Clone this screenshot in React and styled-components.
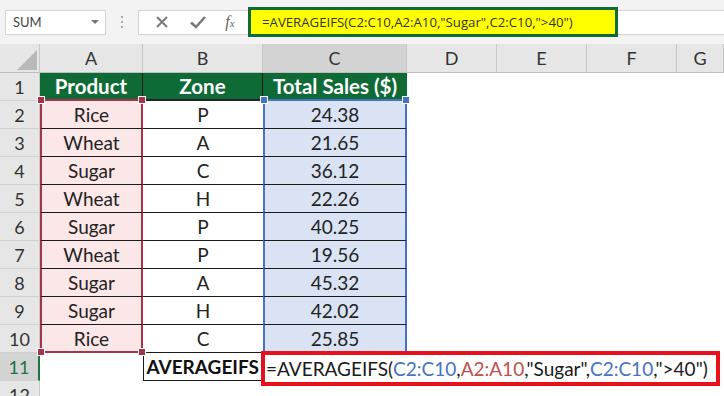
import React from 'react';
import styled, { createGlobalStyle } from 'styled-components';

const GlobalStyle = createGlobalStyle`
  html, body {
    margin: 0;
    padding: 0;
    background: #ffffff;
    overflow: hidden;
  }
  body {
    font-family: Lato, "Liberation Sans", sans-serif;
  }
`;

const rows = [
  ['Rice', 'P', '24.38'],
  ['Wheat', 'A', '21.65'],
  ['Sugar', 'C', '36.12'],
  ['Wheat', 'H', '22.26'],
  ['Sugar', 'P', '40.25'],
  ['Wheat', 'P', '19.56'],
  ['Sugar', 'A', '45.32'],
  ['Sugar', 'H', '42.02'],
  ['Rice', 'C', '25.85'],
];

const columns = ['A', 'B', 'C', 'D', 'E', 'F', 'G'];

const App = () => (
  <Page>
    <GlobalStyle />
    <Toolbar>
      <NameBox>
        <span>SUM</span>
        <Caret />
      </NameBox>
      <Grip>
        <i />
        <i />
        <i />
      </Grip>
      <FxButtons>
        <svg width="16" height="16" viewBox="0 0 16 16">
          <path d="M3 3 L13 13 M13 3 L3 13" stroke="#7a7a7a" strokeWidth="2" fill="none" />
        </svg>
        <svg width="18" height="16" viewBox="0 0 18 16">
          <path d="M2 8.5 L7 13 L16 3" stroke="#7a7a7a" strokeWidth="2.6" fill="none" />
        </svg>
        <FxLabel>
          f<sub>x</sub>
        </FxLabel>
      </FxButtons>
      <FormulaBox>=AVERAGEIFS(C2:C10,A2:A10,"Sugar",C2:C10,"&gt;40")</FormulaBox>
      <FormulaRest />
    </Toolbar>

    <Sheet>
      <Corner>
        <svg width="36" height="28" viewBox="0 0 36 28">
          <polygon points="34,6 34,26 14,26" fill="#b8b8b8" />
        </svg>
      </Corner>
      {columns.map((c) => (
        <ColHead key={c} $active={c === 'C'}>
          {c}
        </ColHead>
      ))}

      <RowHead>1</RowHead>
      <HeadCell $bottom="#a5344a">Product</HeadCell>
      <HeadCell $bottom="#222">Zone</HeadCell>
      <HeadCell $bottom="#4472c4" $last>
        Total Sales ($)
      </HeadCell>
      <Blank />
      <Blank />
      <Blank />
      <Blank />

      {rows.map(([product, zone, sales], i) => (
        <React.Fragment key={i}>
          <RowHead>{i + 2}</RowHead>
          <ProductCell $lastRow={i === rows.length - 1}>
            {i === 0 && (
              <>
                <Handle $color="#a5344a" $x="left" $y="top" />
                <Handle $color="#a5344a" $x="right" $y="top" />
              </>
            )}
            {i === rows.length - 1 && (
              <>
                <Handle $color="#a5344a" $x="left" $y="bottom" />
                <Handle $color="#a5344a" $x="right" $y="bottom" />
              </>
            )}
            {product}
          </ProductCell>
          <ZoneCell $lastRow={i === rows.length - 1}>{zone}</ZoneCell>
          <SalesCell $lastRow={i === rows.length - 1}>
            {i === 0 && (
              <>
                <Handle $color="#4472c4" $x="left" $y="top" />
                <Handle $color="#4472c4" $x="right" $y="top" />
              </>
            )}
            {sales}
          </SalesCell>
          <Blank />
          <Blank />
          <Blank />
          <Blank />
        </React.Fragment>
      ))}

      <RowHead $active>11</RowHead>
      <Blank />
      <LabelCell>AVERAGEIFS</LabelCell>
      <ResultFormula>
        =AVERAGEIFS(<Ref $c="#4472c4">C2:C10</Ref>,<Ref $c="#c0504d">A2:A10</Ref>,"Sugar",
        <Ref $c="#4472c4">C2:C10</Ref>,"&gt;40")
      </ResultFormula>

      <RowHead>12</RowHead>
      <Blank />
      <Blank />
      <Blank />
      <Blank />
      <Blank />
      <Blank />
      <Blank />
    </Sheet>
  </Page>
);

const Page = styled.div`
  width: 724px;
  height: 396px;
  overflow: hidden;
  background: #ffffff;
`;

const Toolbar = styled.div`
  height: 44px;
  background: #f3f3f3;
  display: flex;
  align-items: center;
  padding-left: 5px;
  box-sizing: border-box;
`;

const NameBox = styled.div`
  width: 101px;
  height: 25px;
  box-sizing: border-box;
  background: #ffffff;
  border: 1px solid #d4d4d4;
  display: flex;
  align-items: center;
  justify-content: space-between;
  padding: 0 6px 0 7px;
  font-size: 13px;
  color: #444;
`;

const Caret = styled.span`
  width: 0;
  height: 0;
  border-left: 4px solid transparent;
  border-right: 4px solid transparent;
  border-top: 4px solid #777;
`;

const Grip = styled.div`
  width: 32px;
  display: flex;
  flex-direction: column;
  align-items: center;
  gap: 3px;

  i {
    width: 2px;
    height: 2px;
    background: #a8a8a8;
  }
`;

const FxButtons = styled.div`
  width: 110px;
  height: 25px;
  box-sizing: border-box;
  background: #ffffff;
  border: 1px solid #d4d4d4;
  border-right: none;
  display: flex;
  align-items: center;
  justify-content: space-around;
  padding: 0 4px 0 6px;
`;

const FxLabel = styled.span`
  font-family: "Liberation Serif", serif;
  font-style: italic;
  font-size: 16px;
  color: #666;

  sub {
    font-size: 11px;
    vertical-align: 0;
  }
`;

const FormulaBox = styled.div`
  width: 370px;
  height: 30px;
  box-sizing: border-box;
  background: #ffff00;
  border: 3px solid #0f6b36;
  display: flex;
  align-items: center;
  padding-left: 11px;
  font-family: "Open Sans", sans-serif;
  font-size: 13.2px;
  color: #333;
  white-space: nowrap;
`;

const FormulaRest = styled.div`
  flex: 1;
  height: 25px;
  background: #ffffff;
  border-top: 1px solid #d4d4d4;
  border-bottom: 1px solid #d4d4d4;
  box-sizing: border-box;
`;

const Sheet = styled.div`
  display: grid;
  grid-template-columns: 40px 103px 120px 144px 90px 90px 90px 1fr;
  grid-template-rows: 29px repeat(11, 28px) 28px;
  font-size: 19px;
  color: #222;
`;

const Corner = styled.div`
  background: #e6e6e6;
  border-right: 1px solid #c8c8c8;
  border-bottom: 1px solid #bdbdbd;
  display: flex;
  align-items: flex-end;
  justify-content: flex-end;
  box-sizing: border-box;
`;

const ColHead = styled.div`
  background: ${({ $active }) => ($active ? '#d3d3d3' : '#e6e6e6')};
  border-right: 1px solid #c8c8c8;
  border-bottom: 1px solid #bdbdbd;
  box-sizing: border-box;
  display: flex;
  align-items: center;
  justify-content: center;
  font-size: 18px;
  color: #333;
`;

const RowHead = styled.div`
  background: ${({ $active }) => ($active ? '#d3d3d3' : '#e6e6e6')};
  color: ${({ $active }) => ($active ? '#217346' : '#333')};
  border-right: ${({ $active }) => ($active ? '2px solid #217346' : '1px solid #c8c8c8')};
  border-bottom: 1px solid #d0d0d0;
  box-sizing: border-box;
  display: flex;
  align-items: center;
  justify-content: center;
  font-size: 18px;
`;

const Cell = styled.div`
  position: relative;
  box-sizing: border-box;
  display: flex;
  align-items: center;
  justify-content: center;
  white-space: nowrap;
`;

const Blank = styled(Cell)``;

const HeadCell = styled(Cell)`
  background: #0f6b36;
  color: #ffffff;
  font-weight: 700;
  font-size: 20.5px;
  border-right: ${({ $last }) => ($last ? 'none' : '1px solid #1a1a1a')};
  border-bottom: 2px solid ${({ $bottom }) => $bottom};
`;

const ProductCell = styled(Cell)`
  background: #fbe7e8;
  border-left: 2px solid #a5344a;
  border-right: 2px solid #a5344a;
  border-bottom: ${({ $lastRow }) => ($lastRow ? '2px solid #a5344a' : '1px solid #1a1a1a')};
`;

const ZoneCell = styled(Cell)`
  background: #ffffff;
  border-bottom: 1px solid #1a1a1a;
`;

const SalesCell = styled(Cell)`
  background: #dae3f3;
  border-left: 2px solid #4472c4;
  border-right: 2px solid #4472c4;
  border-bottom: ${({ $lastRow }) => ($lastRow ? '2px solid #4472c4' : '1px solid #1a1a1a')};
`;

const Handle = styled.span`
  position: absolute;
  width: 6px;
  height: 6px;
  background: ${({ $color }) => $color};
  border: 1px solid #ffffff;
  ${({ $x }) => ($x === 'left' ? 'left: -5px;' : 'right: -5px;')}
  ${({ $y }) => ($y === 'top' ? 'top: -5px;' : 'bottom: -5px;')}
  z-index: 2;
`;

const LabelCell = styled(Cell)`
  border: 1px solid #1a1a1a;
  border-top: none;
  font-weight: 700;
  color: #111;
  justify-content: flex-end;
  padding-right: 3px;
`;

const ResultFormula = styled(Cell)`
  grid-column: span 5;
  margin: -2px 4px -5px -2px;
  border: 4px solid #e8111b;
  justify-content: flex-start;
  padding-left: 1px;
  background: #ffffff;
  color: #1a1a1a;
  z-index: 1;
`;

const Ref = styled.span`
  color: ${({ $c }) => $c};
`;

export default App;
